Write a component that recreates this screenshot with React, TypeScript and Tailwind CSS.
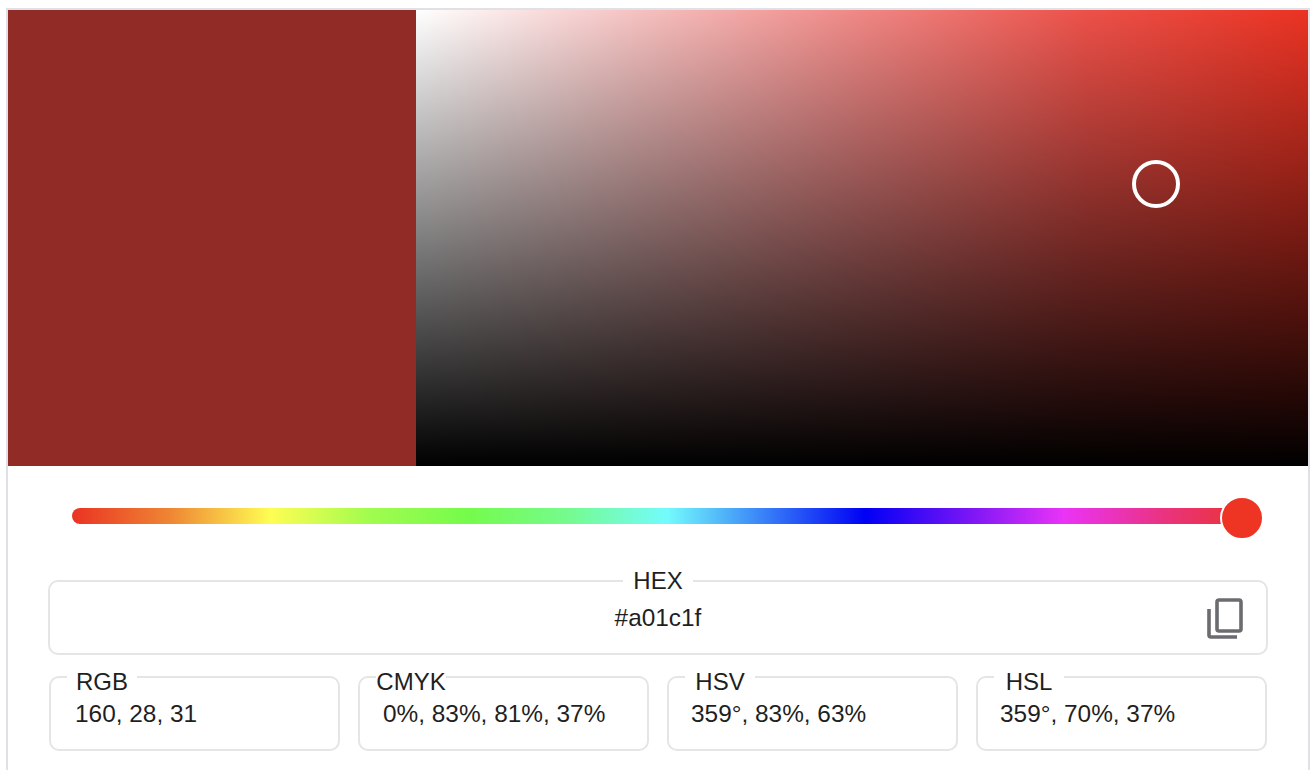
const values = [
  { label: "RGB", value: "160, 28, 31", indent: "pl-6" },
  { label: "CMYK", value: "0%, 83%, 81%, 37%", indent: "pl-[23px]" },
  { label: "HSV", value: "359°, 83%, 63%", indent: "pl-[22px]" },
  { label: "HSL", value: "359°, 70%, 37%", indent: "pl-[22px]" },
];

const CopyIcon = () => (
  <svg width="36" height="41" viewBox="0 0 36 41" fill="none" stroke="#6a6c70" strokeWidth="3.6">
    <rect x="10" y="2" width="24" height="31" rx="2" />
    <path d="M2 11V37a2 2 0 0 0 2 2H30" />
  </svg>
);

const ColorField = ({ label, value, indent }: { label: string; value: string; indent: string }) => (
  <fieldset className="h-[88px] rounded-[10px] border-2 border-[#e5e5e5]">
    <legend className="ml-4">
      <span className="block w-[70px] translate-y-[5px] whitespace-nowrap text-center leading-[28px]">{label}</span>
    </legend>
    <div className={`mt-[9px] text-[24.4px] leading-[28px] ${indent}`}>{value}</div>
  </fieldset>
);

const App = () => {
  return (
    <div className="h-[770px] w-[1310px] overflow-hidden bg-white pl-[6px] pt-2 font-['Liberation_Sans',Arial,sans-serif] text-[24px] text-[#1f1f1f]">
      <div className="h-[762px] border-x-2 border-t-2 border-[#e0e0e6]">
        <div className="flex h-[456px]">
          <div className="w-[408px] bg-[#912b26]" />
          <div className="relative flex-1 bg-[linear-gradient(to_right,#ffffff,#f5c1c0,#ef8784,#ec5149,#ea3323)]">
            <div className="absolute inset-0 bg-[linear-gradient(to_bottom,rgba(0,0,0,0),#000000)]" />
            <div className="absolute left-[716px] top-[150px] h-12 w-12 rounded-full border-4 border-white" />
          </div>
        </div>

        <div className="relative ml-16 mt-[42px] h-4 w-[1190px] rounded-full bg-[linear-gradient(to_right,#ea3323,#ef8733,#fffd54,#a1fc4e,#75fb4c,#75fb8e,#73fbfd,#377ef7,#0000f5,#7514f5,#ea33f7,#ea3380,#ea3323)]">
          <div className="absolute right-[-2px] top-[-12px] h-11 w-11 rounded-full border-2 border-white bg-[#ee3524]" />
        </div>

        <fieldset className="relative ml-10 mt-[43px] h-[88px] w-[1220px] rounded-[10px] border-2 border-[#e5e5e5]">
          <legend className="mx-auto w-[70px] text-center leading-[28px]">HEX</legend>
          <div className="mt-[9px] text-center text-[24.4px] leading-[28px]">#a01c1f</div>
          <div className="absolute right-[23px] top-[3px]">
            <CopyIcon />
          </div>
        </fieldset>

        <div className="ml-[41px] mt-2 grid w-[1218px] grid-cols-4 gap-[18px]">
          {values.map((item) => (
            <ColorField key={item.label} label={item.label} value={item.value} indent={item.indent} />
          ))}
        </div>
      </div>
    </div>
  );
};

export default App;
